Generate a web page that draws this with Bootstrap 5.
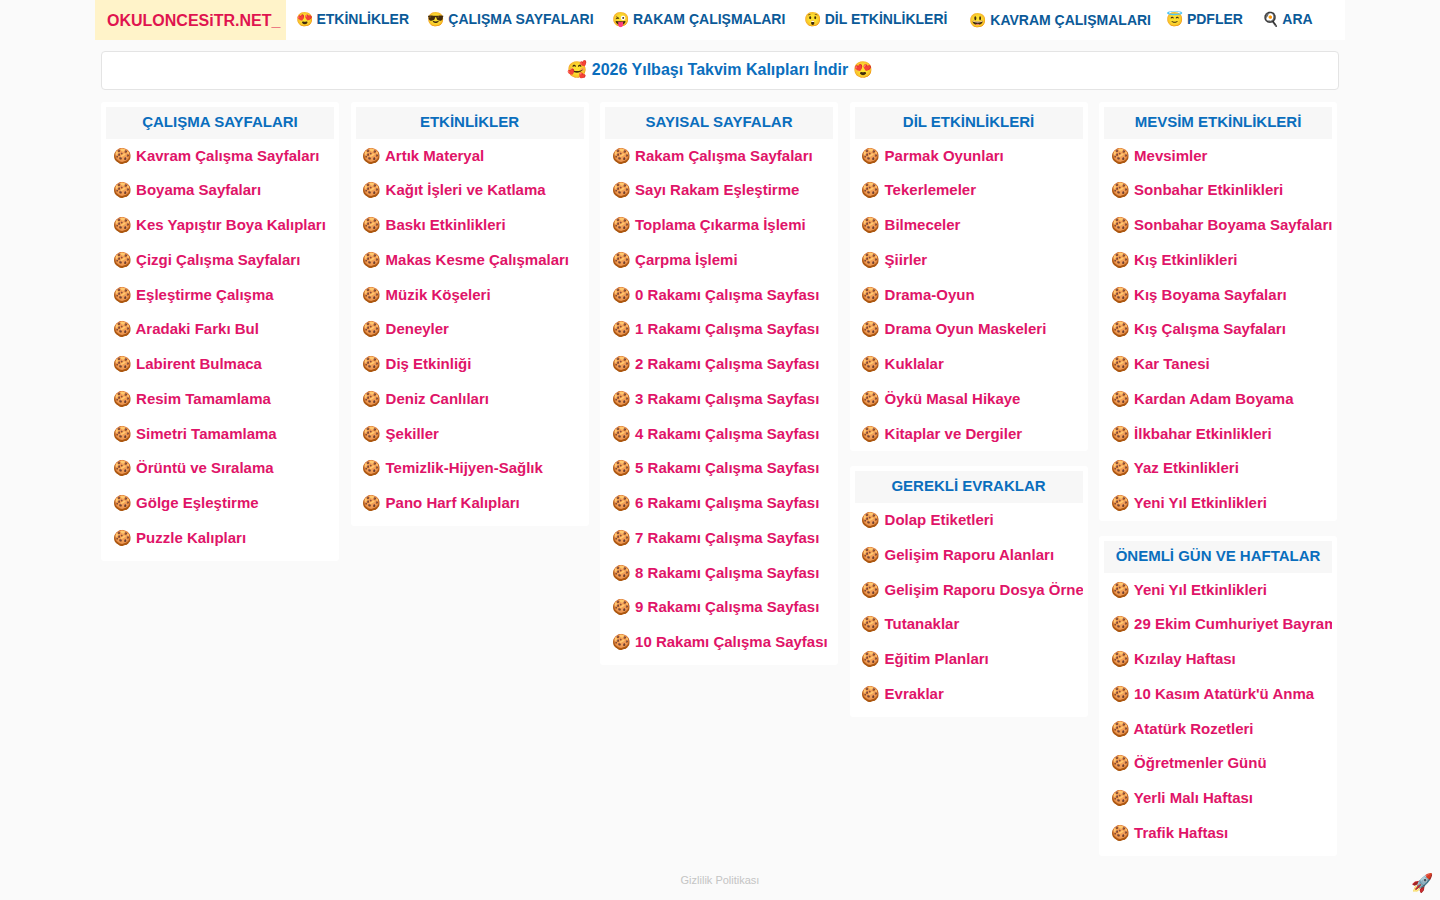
<!DOCTYPE html>
<html lang="tr">
<head>
  <meta charset="UTF-8" />
  <meta name="viewport" content="width=device-width, initial-scale=1.0"/>
  <title>Okul Öncesi</title>
  <link href="https://cdn.jsdelivr.net/npm/bootstrap@5.3.3/dist/css/bootstrap.min.css" rel="stylesheet">
  <style>
    body { background: #fafafa; font-family: "Liberation Sans", Arial, sans-serif; font-weight: 700; font-size: 15px; min-height: 900px; }
    .page-wrap { width: 1250px; margin: 0 auto; }
    .top-bar { height: 40px; background: #fff; }
    .brand-box { width: 191px; height: 40px; background: #fff3c9; color: #e0144f; font-size: 16px; line-height: 41px; padding-left: 12px; text-decoration: none; white-space: nowrap; }
    .top-link { color: #0b5a98; font-size: 14px; line-height: 38px; text-decoration: none; white-space: nowrap; margin-left: 18.5px; }
    .top-link.first { margin-left: 9.6px; }
    .top-link.second { margin-left: 18.4px; }
    .top-link.shift { margin-left: 22px; line-height: 40px; }
    .top-link.tight { margin-left: 15px; }
    .top-link.wide { margin-left: 19px; }
    .promo-box { margin: 11px 6px 12px; height: 39px; background: #fff; border: 1px solid #e4e4e4; border-radius: 4px; line-height: 36px; text-align: center; font-size: 16px; }
    .promo-box a { color: #0a6ebd; text-decoration: none; }
    .cols-grid { display: grid; grid-template-columns: repeat(5, 238px); column-gap: 11.5px; padding-left: 6px; align-items: start; }
    .menu-box { background: #fff; padding: 5px; margin-bottom: 15.1px; border-radius: 3px; }
    .menu-box.no-foot { padding-bottom: 0; }
    .menu-head { height: 32px; background: #f7f7f7; color: #0a6ebd; font-size: 15px; line-height: 30px; text-align: center; white-space: nowrap; overflow: hidden; }
    .menu-list { margin: -0.4px 0 0; padding: 0; list-style: none; overflow: hidden; }
    .menu-list a { display: block; height: 34.75px; line-height: 34.75px; padding-left: 6.9px; color: #e01468; text-decoration: none; white-space: nowrap; }
    .foot-note { position: absolute; left: 0; right: 0; top: 872px; text-align: center; color: #c4c4c4; font-size: 11px; font-weight: 400; }
    .rocket-btn { position: fixed; right: 7px; bottom: 5px; font-size: 18px; line-height: 24px; text-decoration: none; }
  </style>
</head>
<body>

  <div class="page-wrap">
    <nav class="top-bar d-flex align-items-start">
      <a class="brand-box" href="#">OKULONCESiTR.NET_</a>
      <a class="top-link first" href="#">😍 ETKİNLİKLER</a>
      <a class="top-link second" href="#">😎 ÇALIŞMA SAYFALARI</a>
      <a class="top-link" href="#">😜 RAKAM ÇALIŞMALARI</a>
      <a class="top-link" href="#">😲 DİL ETKİNLİKLERİ</a>
      <a class="top-link shift" href="#">😃 KAVRAM ÇALIŞMALARI</a>
      <a class="top-link tight" href="#">😇 PDFLER</a>
      <a class="top-link wide" href="#">🍳 ARA</a>
    </nav>

    <div class="promo-box"><a href="#">🥰 2026 Yılbaşı Takvim Kalıpları İndir 😍</a></div>

    <div class="cols-grid">
      <div>
        <div class="menu-box">
          <div class="menu-head">ÇALIŞMA SAYFALARI</div>
          <ul class="menu-list">
            <li><a href="#">🍪 Kavram Çalışma Sayfaları</a></li>
            <li><a href="#">🍪 Boyama Sayfaları</a></li>
            <li><a href="#">🍪 Kes Yapıştır Boya Kalıpları</a></li>
            <li><a href="#">🍪 Çizgi Çalışma Sayfaları</a></li>
            <li><a href="#">🍪 Eşleştirme Çalışma</a></li>
            <li><a href="#">🍪 Aradaki Farkı Bul</a></li>
            <li><a href="#">🍪 Labirent Bulmaca</a></li>
            <li><a href="#">🍪 Resim Tamamlama</a></li>
            <li><a href="#">🍪 Simetri Tamamlama</a></li>
            <li><a href="#">🍪 Örüntü ve Sıralama</a></li>
            <li><a href="#">🍪 Gölge Eşleştirme</a></li>
            <li><a href="#">🍪 Puzzle Kalıpları</a></li>
          </ul>
        </div>
      </div>

      <div>
        <div class="menu-box">
          <div class="menu-head">ETKİNLİKLER</div>
          <ul class="menu-list">
            <li><a href="#">🍪 Artık Materyal</a></li>
            <li><a href="#">🍪 Kağıt İşleri ve Katlama</a></li>
            <li><a href="#">🍪 Baskı Etkinlikleri</a></li>
            <li><a href="#">🍪 Makas Kesme Çalışmaları</a></li>
            <li><a href="#">🍪 Müzik Köşeleri</a></li>
            <li><a href="#">🍪 Deneyler</a></li>
            <li><a href="#">🍪 Diş Etkinliği</a></li>
            <li><a href="#">🍪 Deniz Canlıları</a></li>
            <li><a href="#">🍪 Şekiller</a></li>
            <li><a href="#">🍪 Temizlik-Hijyen-Sağlık</a></li>
            <li><a href="#">🍪 Pano Harf Kalıpları</a></li>
          </ul>
        </div>
      </div>

      <div>
        <div class="menu-box">
          <div class="menu-head">SAYISAL SAYFALAR</div>
          <ul class="menu-list">
            <li><a href="#">🍪 Rakam Çalışma Sayfaları</a></li>
            <li><a href="#">🍪 Sayı Rakam Eşleştirme</a></li>
            <li><a href="#">🍪 Toplama Çıkarma İşlemi</a></li>
            <li><a href="#">🍪 Çarpma İşlemi</a></li>
            <li><a href="#">🍪 0 Rakamı Çalışma Sayfası</a></li>
            <li><a href="#">🍪 1 Rakamı Çalışma Sayfası</a></li>
            <li><a href="#">🍪 2 Rakamı Çalışma Sayfası</a></li>
            <li><a href="#">🍪 3 Rakamı Çalışma Sayfası</a></li>
            <li><a href="#">🍪 4 Rakamı Çalışma Sayfası</a></li>
            <li><a href="#">🍪 5 Rakamı Çalışma Sayfası</a></li>
            <li><a href="#">🍪 6 Rakamı Çalışma Sayfası</a></li>
            <li><a href="#">🍪 7 Rakamı Çalışma Sayfası</a></li>
            <li><a href="#">🍪 8 Rakamı Çalışma Sayfası</a></li>
            <li><a href="#">🍪 9 Rakamı Çalışma Sayfası</a></li>
            <li><a href="#">🍪 10 Rakamı Çalışma Sayfası</a></li>
          </ul>
        </div>
      </div>

      <div>
        <div class="menu-box no-foot">
          <div class="menu-head">DİL ETKİNLİKLERİ</div>
          <ul class="menu-list">
            <li><a href="#">🍪 Parmak Oyunları</a></li>
            <li><a href="#">🍪 Tekerlemeler</a></li>
            <li><a href="#">🍪 Bilmeceler</a></li>
            <li><a href="#">🍪 Şiirler</a></li>
            <li><a href="#">🍪 Drama-Oyun</a></li>
            <li><a href="#">🍪 Drama Oyun Maskeleri</a></li>
            <li><a href="#">🍪 Kuklalar</a></li>
            <li><a href="#">🍪 Öykü Masal Hikaye</a></li>
            <li><a href="#">🍪 Kitaplar ve Dergiler</a></li>
          </ul>
        </div>
        <div class="menu-box">
          <div class="menu-head">GEREKLİ EVRAKLAR</div>
          <ul class="menu-list">
            <li><a href="#">🍪 Dolap Etiketleri</a></li>
            <li><a href="#">🍪 Gelişim Raporu Alanları</a></li>
            <li><a href="#">🍪 Gelişim Raporu Dosya Örnekleri</a></li>
            <li><a href="#">🍪 Tutanaklar</a></li>
            <li><a href="#">🍪 Eğitim Planları</a></li>
            <li><a href="#">🍪 Evraklar</a></li>
          </ul>
        </div>
      </div>

      <div>
        <div class="menu-box no-foot">
          <div class="menu-head">MEVSİM ETKİNLİKLERİ</div>
          <ul class="menu-list">
            <li><a href="#">🍪 Mevsimler</a></li>
            <li><a href="#">🍪 Sonbahar Etkinlikleri</a></li>
            <li><a href="#">🍪 Sonbahar Boyama Sayfaları</a></li>
            <li><a href="#">🍪 Kış Etkinlikleri</a></li>
            <li><a href="#">🍪 Kış Boyama Sayfaları</a></li>
            <li><a href="#">🍪 Kış Çalışma Sayfaları</a></li>
            <li><a href="#">🍪 Kar Tanesi</a></li>
            <li><a href="#">🍪 Kardan Adam Boyama</a></li>
            <li><a href="#">🍪 İlkbahar Etkinlikleri</a></li>
            <li><a href="#">🍪 Yaz Etkinlikleri</a></li>
            <li><a href="#">🍪 Yeni Yıl Etkinlikleri</a></li>
          </ul>
        </div>
        <div class="menu-box">
          <div class="menu-head">ÖNEMLİ GÜN VE HAFTALAR</div>
          <ul class="menu-list">
            <li><a href="#">🍪 Yeni Yıl Etkinlikleri</a></li>
            <li><a href="#">🍪 29 Ekim Cumhuriyet Bayramı</a></li>
            <li><a href="#">🍪 Kızılay Haftası</a></li>
            <li><a href="#">🍪 10 Kasım Atatürk'ü Anma</a></li>
            <li><a href="#">🍪 Atatürk Rozetleri</a></li>
            <li><a href="#">🍪 Öğretmenler Günü</a></li>
            <li><a href="#">🍪 Yerli Malı Haftası</a></li>
            <li><a href="#">🍪 Trafik Haftası</a></li>
          </ul>
        </div>
      </div>
    </div>
  </div>

  <div class="foot-note">Gizlilik Politikası</div>
  <a class="rocket-btn" href="#">🚀</a>

  <script src="https://cdn.jsdelivr.net/npm/bootstrap@5.3.3/dist/js/bootstrap.bundle.min.js"></script>
</body>
</html>
